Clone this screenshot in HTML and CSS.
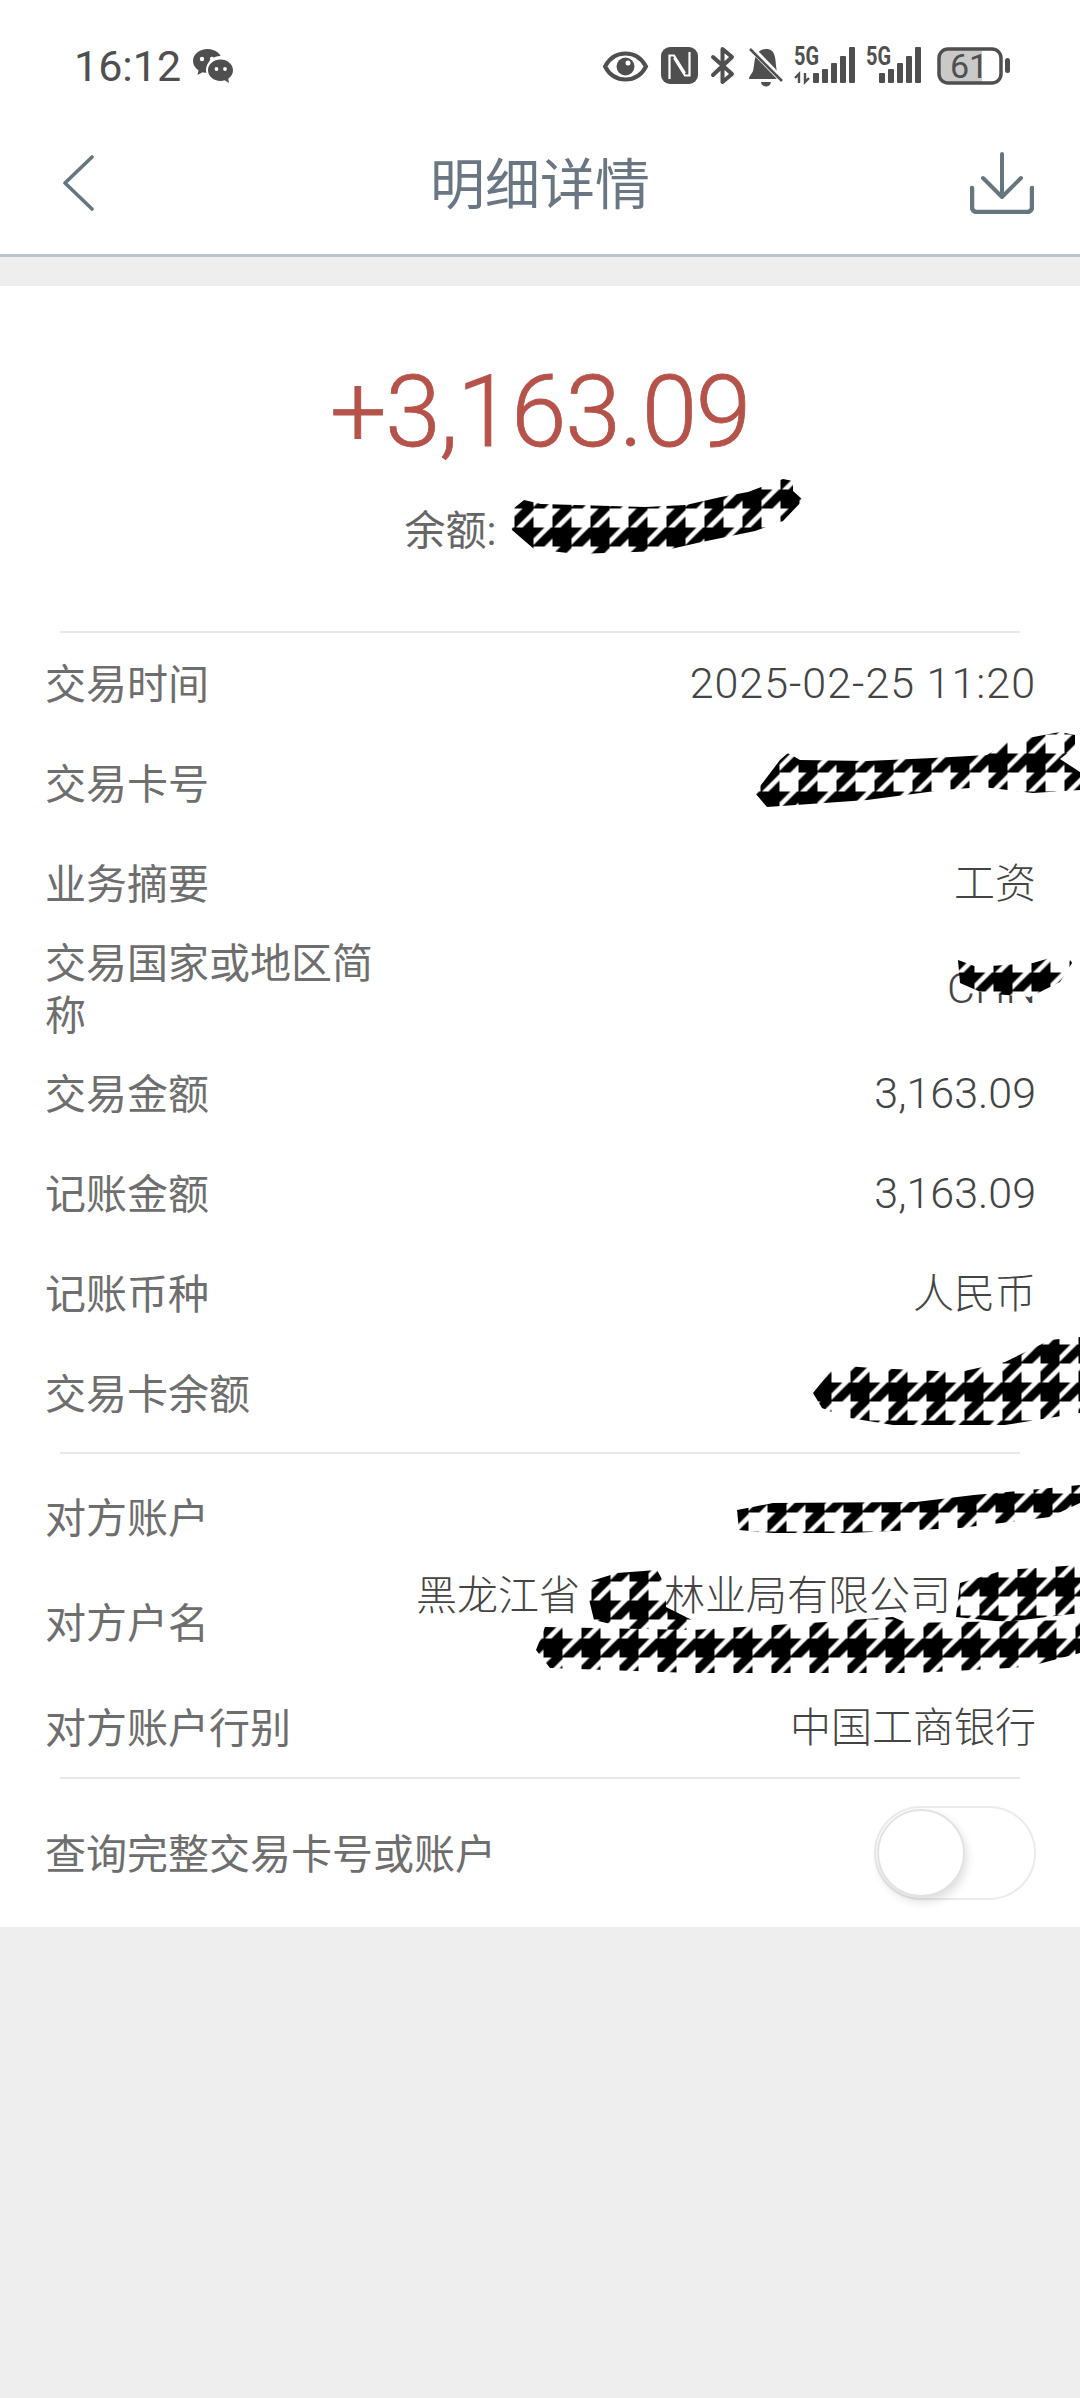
FILE: index.html
```html
<!DOCTYPE html>
<html lang="zh-CN">
<head>
    <meta charset="UTF-8">
    <meta name="viewport" content="width=device-width, initial-scale=1.0">
    <title>明细详情</title>
    <link rel="stylesheet" href="styles.css">
</head>
<body>
    <header class="status-bar">
        <div class="status-left">
            <span class="clock">16:12</span>
            <svg class="wechat" viewBox="193 48 41 36" width="41" height="36">
                <path d="M207.500 49C199.500 49 193 54.300 193 61C193 64.800 195.200 68.100 198.500 70.300L197.500 75L202.600 72.200C204.200 72.700 205.800 73 207.500 73C215.500 73 222 67.600 222 61C222 54.300 215.500 49 207.500 49Z" fill="#4f4f4f"/>
                <circle cx="220.500" cy="70.500" r="14.500" fill="#fff"/>
                <path d="M220.500 59.500C213.600 59.500 208 64.300 208 70.300C208 76.300 213.600 81 220.500 81C222 81 223.400 80.800 224.700 80.300L229 83L228.200 78.800C231.300 76.800 233 73.800 233 70.300C233 64.300 227.400 59.500 220.500 59.500Z" fill="#4f4f4f"/>
                <circle cx="202" cy="59" r="2.200" fill="#fff"/>
                <circle cx="212" cy="59" r="2.200" fill="#fff"/>
                <circle cx="216.500" cy="69" r="1.900" fill="#fff"/>
                <circle cx="225" cy="69" r="1.900" fill="#fff"/>
            </svg>
        </div>
        <svg class="status-icons" viewBox="603 36 408 60" width="408" height="60">
            <!-- eye -->
            <path d="M605 66.500C610 57 618 53.500 625.500 53.500C633 53.500 641 57 646 66.500C641 76 633 79.500 625.500 79.500C618 79.500 610 76 605 66.500Z" fill="none" stroke="#4f4f4f" stroke-width="4"/>
            <circle cx="625.500" cy="66.500" r="9" fill="#4f4f4f"/>
            <circle cx="628" cy="63" r="2.500" fill="#fff"/>
            <!-- nfc -->
            <rect x="661" y="47" width="37" height="37" rx="9" fill="#4f4f4f"/>
            <path d="M669.500 79V55.500H674L685 73M689.500 52V75.500H685L674 58" fill="none" stroke="#fff" stroke-width="2.200"/>
            <!-- bluetooth -->
            <path d="M713 57L732 74L722.500 82V49L732 57L713 75" fill="none" stroke="#4f4f4f" stroke-width="4" stroke-linejoin="round" stroke-linecap="round"/>
            <!-- muted bell -->
            <path d="M766 49C770 49 773 51 774 54C776 58 775.500 66 777 71C778 74 781 76 781 79H749C749 76 752 74 753 71C754.500 66 754 58 757 54C759 50.500 762 49 766 49Z" fill="#4f4f4f"/>
            <path d="M761 82H771C770.500 85 768.500 86.500 766 86.500C763.500 86.500 761.500 85 761 82Z" fill="#4f4f4f"/>
            <path d="M749 46L784 82" stroke="#fff" stroke-width="6"/>
            <path d="M750 49L782 81" stroke="#4f4f4f" stroke-width="2.500"/>
            <!-- first signal -->
            <text class="net" x="794" y="65" textLength="25" lengthAdjust="spacingAndGlyphs">5G</text>
            <path d="M799 83V74L795 78M805 73V82L809 78" fill="none" stroke="#4f4f4f" stroke-width="2.400"/>
            <rect x="813" y="73" width="6" height="10" rx="1" fill="#4f4f4f"/>
            <rect x="822" y="69" width="6" height="14" rx="1" fill="#4f4f4f"/>
            <rect x="831" y="63" width="6" height="20" rx="1" fill="#4f4f4f"/>
            <rect x="840" y="56" width="6" height="27" rx="1" fill="#4f4f4f"/>
            <rect x="849" y="47" width="6" height="36" rx="1" fill="#4f4f4f"/>
            <!-- second signal -->
            <text class="net" x="866" y="65" textLength="25" lengthAdjust="spacingAndGlyphs">5G</text>
            <rect x="879" y="73" width="6" height="10" rx="1" fill="#4f4f4f"/>
            <rect x="888" y="69" width="6" height="14" rx="1" fill="#4f4f4f"/>
            <rect x="897" y="63" width="6" height="20" rx="1" fill="#4f4f4f"/>
            <rect x="906" y="56" width="6" height="27" rx="1" fill="#4f4f4f"/>
            <rect x="915" y="47" width="6" height="36" rx="1" fill="#4f4f4f"/>
            <!-- battery -->
            <path d="M947 50H982V82H947C943 82 940 79 940 75V57C940 53 943 50 947 50Z" fill="#c9c9c9"/>
            <rect x="939" y="49" width="62" height="34" rx="9" fill="none" stroke="#4f4f4f" stroke-width="3.500"/>
            <rect x="1005" y="58" width="5" height="15" rx="2.500" fill="#4f4f4f"/>
            <text class="battery-level" x="969" y="78" text-anchor="middle">61</text>
        </svg>
    </header>

    <nav class="nav">
        <svg class="nav-back" viewBox="0 0 32 56" width="32" height="56">
            <path d="M30 2L3 28L30 54" fill="none" stroke="#66767f" stroke-width="3.600" stroke-linecap="round" stroke-linejoin="round"/>
        </svg>
        <h1 class="nav-title">明细详情</h1>
        <svg class="nav-download" viewBox="0 0 64 62" width="64" height="62">
            <path d="M32 2V44M13 26L32 45L51 26" fill="none" stroke="#66767f" stroke-width="4" stroke-linecap="round" stroke-linejoin="round"/>
            <path d="M2 36V55C2 58 4 60 7 60H57C60 60 62 58 62 55V36" fill="none" stroke="#66767f" stroke-width="4.500" stroke-linecap="round"/>
        </svg>
    </nav>

    <main class="card">
        <div class="summary">
            <div class="amount">+3,163.09</div>
            <div class="balance">余额:<span class="balance-gap"></span></div>
        </div>

        <div class="rule"></div>
        <section class="group">
            <div class="row"><span class="label">交易时间</span><span class="value date">2025-02-25 11:20</span></div>
            <div class="row"><span class="label">交易卡号</span><span class="value"></span></div>
            <div class="row"><span class="label">业务摘要</span><span class="value value-text">工资</span></div>
            <div class="row"><span class="label">交易国家或地区简称</span><span class="value">CHN</span></div>
            <div class="row"><span class="label">交易金额</span><span class="value">3,163.09</span></div>
            <div class="row"><span class="label">记账金额</span><span class="value">3,163.09</span></div>
            <div class="row"><span class="label">记账币种</span><span class="value value-text">人民币</span></div>
            <div class="row"><span class="label">交易卡余额</span><span class="value"></span></div>
        </section>

        <div class="rule"></div>
        <section class="group group-second">
            <div class="row"><span class="label">对方账户</span><span class="value"></span></div>
            <div class="row"><span class="label">对方户名</span><span class="value value-text name">黑龙江省<span class="gap-a"></span>林业局有限公司<span class="gap-b"></span><br>&nbsp;</span></div>
            <div class="row"><span class="label">对方账户行别</span><span class="value value-text">中国工商银行</span></div>
        </section>

        <div class="rule"></div>
        <div class="row row-switch">
            <span class="label label-wide">查询完整交易卡号或账户</span>
            <span class="switch"><span class="switch-knob"></span></span>
        </div>
    </main>

    <!-- scribbles drawn over the private values -->
    <svg class="scribbles" viewBox="0 0 1080 1700" width="1080" height="1700">
        <defs>
            <pattern id="tooth" width="8" height="8" patternUnits="userSpaceOnUse">
                <rect width="8" height="8" fill="#fff"/>
                <rect x="0" y="4" width="4" height="4" fill="#000"/>
                <path d="M1.700 0H4V0.300L0.300 4H0V1.700ZM4 1.700V4H1.700Z" fill="#000"/>
                <path d="M4 4H6.300L4 6.300ZM7.700 4H8V6.300L6.300 8H4V7.700Z" fill="#000"/>
            </pattern>
            <pattern id="t-balance" href="#tooth" patternTransform="translate(20.500 14.500) scale(4.750)"/>
            <pattern id="t-card" href="#tooth" patternTransform="translate(0.500 12.500) scale(4.750)"/>
            <pattern id="t-chn" href="#tooth" patternTransform="translate(5.500 3.500) scale(4.750)"/>
            <pattern id="t-rest" href="#tooth" patternTransform="translate(14.500 33.500) scale(4.750)"/>
            <pattern id="t-acct" href="#tooth" patternTransform="translate(7.500 30.500) scale(4.750)"/>
            <pattern id="t-name-a" href="#tooth" patternTransform="translate(21.500 23.500) scale(4.750)"/>
            <pattern id="t-name-b" href="#tooth" patternTransform="translate(29.500 0.500) scale(4.750)"/>
            <pattern id="t-name-c" href="#tooth" patternTransform="translate(11.500 23.500) scale(4.750)"/>
        </defs>
        <path fill="url(#t-balance)" d="M508 513L524 500L541 504L645 507L686 505L721 497L748 492L783 479L793 481V491L803 500L783 521L755 531L697 543L662 551L576 554L534 549L512 530Z"/>
        <path fill="url(#t-card)" d="M755 793L780 760L788 753L800 760L867 761L933 758L987 755L1007 742L1060 732L1075 735V747L1060 759L1080 772V790L1033 793L983 787L943 790L867 800L767 807Z"/>
        <path fill="url(#t-chn)" d="M958 960L977 967L1033 963L1067 953L1072 963L1060 982L1030 997L983 993L960 983Z"/>
        <path fill="url(#t-rest)" d="M813 1393L826 1377L835 1365L871 1368L960 1372L1005 1362L1050 1340L1080 1337V1413L1005 1425L893 1425L844 1417L822 1408Z"/>
        <path fill="url(#t-acct)" d="M737 1510L773 1503L916 1502L974 1495L1050 1488L1080 1485V1503L1050 1517L960 1528L849 1533L773 1533L739 1530Z"/>
        <path fill="url(#t-name-a)" d="M585 1583L617 1573L657 1570L666 1587V1607L692 1620L688 1633L648 1633L594 1620Z"/>
        <path fill="url(#t-name-b)" d="M960 1583L1005 1570L1080 1565V1613L1005 1622L956 1617Z"/>
        <path fill="url(#t-name-c)" d="M536 1650L545 1627L692 1630L826 1622L893 1617L907 1623L1080 1620V1653L1027 1667L916 1673L692 1673L550 1668Z"/>
    </svg>
</body>
</html>
```

FILE: styles.css
```css
html, body {
    margin: 0;
    background-color: #eeeeee;
}

body {
    position: relative;
    width: 1080px;
    min-height: 2398px;
    font-family: Roboto, "Noto Sans CJK SC", sans-serif;
}

.status-bar {
    display: flex;
    justify-content: space-between;
    align-items: center;
    height: 60px;
    padding: 36px 69px 16px 74px;
    background-color: #fff;
}

.status-left {
    display: flex;
    align-items: center;
    gap: 12px;
}

.clock {
    font-size: 43px;
    color: #4f4f4f;
}

.status-icons .net {
    font-family: Roboto, sans-serif;
    font-size: 25px;
    font-weight: 700;
    fill: #4f4f4f;
}

.status-icons .battery-level {
    font-family: Roboto, sans-serif;
    font-size: 34px;
    fill: #4f4f4f;
}

.nav {
    display: grid;
    grid-template-columns: 1fr auto 1fr;
    align-items: center;
    height: 142px;
    padding: 0 46px;
    background-color: #fff;
    border-bottom: 3px solid #b9c6ce;
}

.nav-back {
    margin-left: 16px;
}

.nav-download {
    justify-self: end;
}

.nav-title {
    margin: 0;
    padding-bottom: 6px;
    font-size: 55px;
    font-weight: 400;
    color: #6a7782;
}

.card {
    margin-top: 29px;
    background-color: #fff;
}

.summary {
    padding: 66px 0 74px;
    text-align: center;
}

.amount {
    font-size: 100px;
    font-weight: 300;
    line-height: 120px;
    letter-spacing: -1.400px;
    color: #b5524a;
    -webkit-text-stroke: 0.800px #b5524a;
}

.balance {
    display: flex;
    justify-content: center;
    margin-top: 33px;
    font-size: 41px;
    line-height: 52px;
    color: #666;
}

.balance-gap {
    width: 179px;
}

.rule {
    height: 2px;
    margin: 0 60px;
    background-color: #e8e8e8;
}

.group {
    padding: 0 0 9px;
}

.group-second {
    padding: 13px 0 0;
}

.row {
    display: flex;
    align-items: center;
    box-sizing: border-box;
    min-height: 100px;
    padding: 1.500px 44px 1.500px 45px;
}

.label {
    width: 340px;
    margin-right: 30px;
    padding-top: 3px;
    flex: none;
    font-size: 41px;
    line-height: 52px;
    color: #6e6e6e;
}

.label-wide {
    width: auto;
    margin-right: auto;
}

.value {
    flex: 1;
    font-size: 43px;
    font-weight: 300;
    line-height: 52px;
    text-align: right;
    color: #444;
}

.value-text {
    font-size: 41px;
    padding-top: 2px;
}

.date {
    letter-spacing: 1px;
}

.name {
    padding: 1.500px 0;
    white-space: nowrap;
}

.gap-a {
    display: inline-block;
    width: 84px;
}

.gap-b {
    display: inline-block;
    width: 85px;
}

.row-switch {
    height: 148px;
}

.switch {
    box-sizing: border-box;
    display: block;
    width: 162px;
    height: 94px;
    border: 2px solid #ebebeb;
    border-radius: 47px;
}

.switch-knob {
    display: block;
    box-sizing: border-box;
    width: 88px;
    height: 88px;
    margin: 1px;
    background-color: #fff;
    border: 2px solid #e2e2e2;
    border-radius: 50%;
    box-shadow: 2px 5px 10px rgba(0, 0, 0, 0.13);
}

.scribbles {
    position: absolute;
    top: 0;
    left: 0;
    pointer-events: none;
}
```
